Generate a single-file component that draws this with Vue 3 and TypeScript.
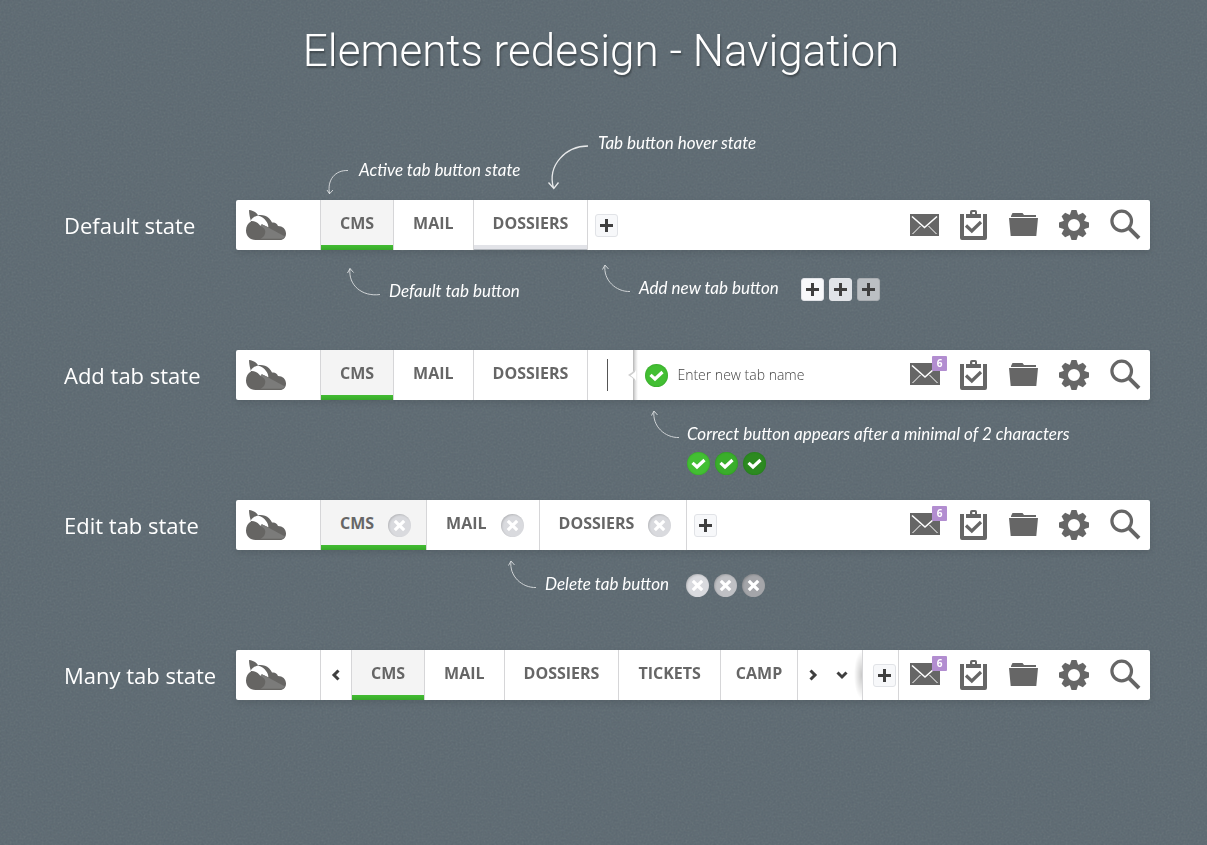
<script setup lang="ts">
import { ref } from 'vue'

type Kind = 'default' | 'add' | 'edit' | 'many'

interface Tab {
  name: string
  active?: boolean
  hovered?: boolean
  clipped?: boolean
}

interface Row {
  kind: Kind
  label: string
  unread: number
  tabs: Tab[]
}

const baseTabs: Tab[] = [{ name: 'CMS', active: true }, { name: 'MAIL' }, { name: 'DOSSIERS' }]

const rows: Row[] = [
  {
    kind: 'default',
    label: 'Default state',
    unread: 0,
    tabs: [{ name: 'CMS', active: true }, { name: 'MAIL' }, { name: 'DOSSIERS', hovered: true }],
  },
  { kind: 'add', label: 'Add tab state', unread: 6, tabs: baseTabs },
  { kind: 'edit', label: 'Edit tab state', unread: 6, tabs: baseTabs },
  {
    kind: 'many',
    label: 'Many tab state',
    unread: 6,
    tabs: [...baseTabs, { name: 'TICKETS' }, { name: 'CAMP', clipped: true }],
  },
]

const tools = [
  { id: 'clipboard', title: 'Tasks' },
  { id: 'folder', title: 'Files' },
  { id: 'gear', title: 'Settings' },
  { id: 'search', title: 'Search' },
]

const shades = ['normal', 'hover', 'pressed']
const newTab = ref('')
</script>

<template>
  <svg class="defs" aria-hidden="true">
    <symbol id="logo" viewBox="0 0 40 30">
      <path fill="#666563" d="M3 0C7 0.500 11 2.500 12 5.200C15 4.500 20 5 23 8.300C25 10.500 25.500 11.500 26 12.500C29 12 31 13.500 32 16C36.500 16 40 19 40 23.500C40 27.500 37.500 30 34 30H9.500C4 30 0 26 0 20.500C0 16 2 13 5 11.500C4 8 3 4 3 0Z" />
      <path fill="#fff" d="M5 10C6.500 8 8.500 6.300 12 5.500C16 6.500 18.500 8.500 20 11C21.500 13 22.500 15 22.300 17.200L15.800 14.200L14.500 16C12.500 13 9 10.800 5 11Z" />
      <path fill="#7b7b7a" d="M14.500 16L15.800 14.200L18 15.200L39 26.500C37.500 28.500 36 28.800 34 28.800H14C17 28 19.300 25 19.300 21.500C19.300 19 17 17 14.500 16Z" />
    </symbol>
    <symbol id="mail" viewBox="0 0 50 50">
      <path fill="#666" d="M10 14H39V36H10Z" />
      <path fill="none" stroke="#fff" stroke-width="1.600" d="M12 16.500L24.500 27.500L37 16.500" />
      <path fill="none" stroke="#fff" d="M12.500 34L20.500 26M36.500 34L28.500 26" />
    </symbol>
    <symbol id="mail-unread" viewBox="0 0 50 50">
      <path fill="#666" d="M10 13H40V35H10Z" />
      <path fill="none" stroke="#fff" stroke-width="1.600" d="M12 15.500L25 27L38 15.500" />
      <path fill="none" stroke="#fff" d="M12.500 33L20.500 25M37.500 33L29.500 25" />
    </symbol>
    <symbol id="clipboard" viewBox="0 0 50 50">
      <path fill="#666" d="M10 14H14V36H33V14H37V38Q37 40 35 40H12Q10 40 10 38Z" />
      <path fill="#666" fill-rule="evenodd" d="M16 14H20V12Q20 10 22 10H25Q27 10 27 12V14H31V18H16ZM22.300 14H25V12H22.300Z" />
      <path fill="none" stroke="#666" stroke-width="3.200" d="M16 25.500L21.800 31L31 22" />
    </symbol>
    <symbol id="folder" viewBox="0 0 50 50">
      <path fill="#666" d="M11 17V16L12.500 13H22.500L24 15H36V17ZM9 18H38L36.300 36H10.700Z" />
    </symbol>
    <symbol id="gear" viewBox="0 0 50 50">
      <g fill="#666" transform="translate(24 25)">
        <path v-for="a in 8" :key="a" :transform="`rotate(${a * 45})`" d="M-4.500-9L-2.500-15H2.500L4.500-9Z" />
        <path fill-rule="evenodd" d="M-11 0A11 11 0 1 0 11 0A11 11 0 1 0-11 0ZM-6 0A6 6 0 1 1 6 0A6 6 0 1 1-6 0Z" />
      </g>
    </symbol>
    <symbol id="search" viewBox="0 0 50 50">
      <g fill="none" stroke="#666">
        <circle cx="21.700" cy="21" r="9.800" stroke-width="3.200" />
        <path stroke-width="4" d="M28.500 27.700L39 38.200" />
      </g>
    </symbol>
    <symbol id="plus" viewBox="0 0 13 13">
      <path fill="#3f3f3f" d="M5 0H8V5H13V8H8V13H5V8H0V5H5Z" />
    </symbol>
    <symbol id="check" viewBox="0 0 23 23">
      <path fill="none" stroke="#fff" stroke-width="3.200" d="M5.500 10.800L10 15L17.500 8" />
    </symbol>
    <symbol id="cross" viewBox="0 0 23 23">
      <path fill="none" stroke="#fff" stroke-width="3.200" d="M6.800 6.800L16.200 16.200M16.200 6.800L6.800 16.200" />
    </symbol>
    <symbol id="chevron" viewBox="0 0 12 12">
      <path fill="none" stroke="#3f3f3f" stroke-width="3" d="M8.500 1.500L4 6L8.500 10.500" />
    </symbol>
    <symbol id="curl" viewBox="0 0 30 30">
      <path d="M28 27.500C14 28 1 16 3 1M0.500 5.500L3 1L6.500 5" />
    </symbol>
  </svg>

  <svg class="grain" aria-hidden="true">
    <filter id="noise">
      <feTurbulence type="fractalNoise" baseFrequency="0.5" numOctaves="2" />
      <feColorMatrix type="saturate" values="0.3" />
    </filter>
    <rect width="100%" height="100%" filter="url(#noise)" />
  </svg>

  <main class="page">
    <h1>Elements redesign - Navigation</h1>

    <section v-for="row in rows" :key="row.kind" class="state" :class="row.kind">
      <div v-if="row.kind === 'default'" class="strip above">
        <p class="note active-note">
          <svg class="arrow" width="24" height="28" viewBox="0 0 24 28">
            <path d="M21 2.500C8 2 0 12 2.500 25.500M0 22L2.500 25.800L6 22" />
          </svg>
          <span>Active tab button state</span>
        </p>
        <p class="note hover-note">
          <svg class="arrow strong" width="42" height="46" viewBox="0 0 42 46">
            <path d="M40 1C18 1-1 20 5.500 43M0.500 37.500L5.800 43.500L10.500 37.500" />
          </svg>
          <span>Tab button hover state</span>
        </p>
      </div>

      <div class="line">
        <h2>{{ row.label }}</h2>
        <nav class="bar" :aria-label="row.label">
          <a class="logo" href="#" aria-label="Home"><svg width="40" height="30"><use href="#logo" /></svg></a>

          <button v-if="row.kind === 'many'" class="scroll first" aria-label="Previous tabs">
            <svg width="12" height="12"><use href="#chevron" /></svg>
          </button>

          <div
            v-for="tab in row.tabs"
            :key="tab.name"
            class="tab"
            :class="{ active: tab.active, hovered: tab.hovered, clipped: tab.clipped }"
          >
            <button class="name">{{ tab.name }}</button>
            <button v-if="row.kind === 'edit'" class="round delete" :aria-label="`Delete ${tab.name}`">
              <svg width="23" height="23"><use href="#cross" /></svg>
            </button>
          </div>

          <button v-if="row.kind === 'default' || row.kind === 'edit'" class="square" aria-label="Add new tab">
            <svg width="13" height="13"><use href="#plus" /></svg>
          </button>

          <template v-if="row.kind === 'add'">
            <div class="caret-cell"><i class="caret"></i></div>
            <form class="new-tab" @submit.prevent>
              <svg class="notch" width="8" height="16" viewBox="0 0 8 16" aria-hidden="true">
                <path fill="#cfcfcf" d="M7 0C7 4 3 6 0 8C3 10 7 12 7 16Z" />
                <path fill="#fff" d="M8 3C7 6 4 7 2.500 8.500C4 10 7 11 8 14Z" />
              </svg>
              <button class="round confirm" aria-label="Confirm"><svg width="23" height="23"><use href="#check" /></svg></button>
              <input v-model="newTab" type="text" aria-label="New tab name" placeholder="Enter new tab name" />
            </form>
          </template>

          <template v-if="row.kind === 'many'">
            <div class="more">
              <button class="scroll next" aria-label="Next tabs"><svg width="12" height="12"><use href="#chevron" /></svg></button>
              <button class="scroll down" aria-label="All tabs"><svg width="12" height="12"><use href="#chevron" /></svg></button>
            </div>
            <div class="add-cell">
              <button class="square" aria-label="Add new tab"><svg width="13" height="13"><use href="#plus" /></svg></button>
            </div>
          </template>

          <div class="tools">
            <button aria-label="Mail">
              <svg width="50" height="50"><use :href="row.unread ? '#mail-unread' : '#mail'" /></svg>
              <span v-if="row.unread" class="badge">{{ row.unread }}</span>
            </button>
            <button v-for="tool in tools" :key="tool.id" :aria-label="tool.title">
              <svg width="50" height="50"><use :href="`#${tool.id}`" /></svg>
            </button>
          </div>
        </nav>
      </div>

      <div class="strip below">
        <template v-if="row.kind === 'default'">
          <p class="note default-note">
            <svg class="arrow" width="34" height="30" viewBox="0 0 34 30">
              <path d="M33 27.500C15 30 1 18 3 1.500M0.500 6L3 1.500L6.500 5.500" />
            </svg>
            <span>Default tab button</span>
          </p>
          <div class="note add-note">
            <svg class="arrow" width="30" height="30"><use href="#curl" /></svg>
            <span>Add new tab button</span>
            <div class="samples">
              <button v-for="s in shades" :key="s" class="square" :class="s" :aria-label="`Add, ${s}`">
                <svg width="13" height="13"><use href="#plus" /></svg>
              </button>
            </div>
          </div>
        </template>
        <div v-else-if="row.kind === 'add'" class="note correct-note">
          <svg class="arrow" width="30" height="30"><use href="#curl" /></svg>
          <span>Correct button appears after a minimal of 2 characters</span>
          <div class="samples">
            <button v-for="s in shades" :key="s" class="round confirm" :class="s" :aria-label="`Confirm, ${s}`">
              <svg width="23" height="23"><use href="#check" /></svg>
            </button>
          </div>
        </div>
        <div v-else-if="row.kind === 'edit'" class="note delete-note">
          <svg class="arrow" width="30" height="30"><use href="#curl" /></svg>
          <span>Delete tab button</span>
          <div class="samples">
            <button v-for="s in shades" :key="s" class="round delete" :class="s" :aria-label="`Delete, ${s}`">
              <svg width="23" height="23"><use href="#cross" /></svg>
            </button>
          </div>
        </div>
      </div>
    </section>
  </main>
</template>

<style>
body {
  margin: 0;
  background: #5b6870;
}
</style>

<style scoped>
.defs {
  position: absolute;
  width: 0;
  height: 0;
}

.grain {
  position: fixed;
  inset: 0;
  width: 100%;
  height: 100%;
  opacity: 0.12;
  pointer-events: none;
}

.page {
  position: relative;
  box-sizing: border-box;
  padding: 24px 57px 0 64px;
  font-family: 'Open Sans', 'Noto Sans', sans-serif;
  color: #fff;
}

svg {
  display: block;
}

h1 {
  margin: 0;
  padding-right: 12px;
  text-align: center;
  font: 300 44px/54px Roboto, 'Helvetica Neue', sans-serif;
  text-shadow: 1px 2px 2px rgba(0, 0, 0, 0.35);
}

h2 {
  flex: none;
  width: 172px;
  margin: 0;
  font-size: 22px;
  font-weight: 400;
  line-height: 50px;
  white-space: nowrap;
}

button {
  padding: 0;
  border: 0;
  background: none;
  font: inherit;
  color: inherit;
  cursor: pointer;
}

.line {
  display: flex;
}

.bar {
  display: flex;
  flex: 1;
  height: 50px;
  border-radius: 2px;
  background: #fff;
  box-shadow: 0 3px 6px rgba(0, 0, 0, 0.1);
  color: #666;
}

.logo {
  display: flex;
  align-items: center;
  width: 74px;
  padding-left: 10px;
  border-right: 1px solid #d6d6d8;
}

.tab {
  display: flex;
  align-items: center;
  border-right: 1px solid #d6d6d8;
}

.tab .name {
  box-sizing: border-box;
  height: 50px;
  padding: 0 19px;
  border-bottom: 5px solid transparent;
  font-size: 16px;
  font-weight: 700;
}

.tab.active {
  background: linear-gradient(#f4f4f4 45px, #42bd32 45px, #39a82b 50px);
}

.tab.hovered {
  background: linear-gradient(#fff 45px, #e2e3e8 45px, #e2e3e8 49px, #b4b8be 49px);
}

.edit .tab {
  padding-right: 15px;
}

.edit .tab .name {
  padding-right: 14px;
}

.tab.clipped .name {
  padding: 0 15px;
}

.square {
  display: grid;
  flex: none;
  place-items: center;
  box-sizing: border-box;
  width: 23px;
  height: 23px;
  border: 1px solid #e1e3e7;
  border-radius: 3px;
  background: #f7f8fa;
}

.bar .square {
  align-self: center;
  margin-left: 7px;
}

.square.hover {
  background: #e0e3e8;
}

.square.pressed {
  border-color: #a9adb1;
  background: #bbbfc3;
}

.round {
  flex: none;
  width: 23px;
  height: 23px;
  border-radius: 50%;
}

.confirm {
  background: #43bf33;
  box-shadow: inset 0 0 2px rgba(0, 80, 0, 0.35);
}

.confirm.hover {
  background: #3aae2b;
}

.confirm.pressed {
  background: #2c8a20;
}

.delete {
  background: #d9dade;
  box-shadow: inset 1px 1px 2px rgba(0, 0, 0, 0.16);
}

.delete.hover {
  background: #bfc0c4;
}

.delete.pressed {
  background: #a4a5a9;
}

.caret-cell {
  display: flex;
  align-items: center;
  width: 45px;
}

.caret {
  width: 1px;
  height: 32px;
  margin-left: 19px;
  background: #555;
}

.new-tab {
  position: relative;
  display: flex;
  align-items: center;
  padding-left: 12px;
  background: linear-gradient(90deg, #b4b4b4 0, #dcdcdc 2px, #fff 5px);
}

.notch {
  position: absolute;
  left: -5px;
  top: 17px;
}

.new-tab input {
  width: 200px;
  height: 30px;
  margin: 0 0 2px 9px;
  padding: 0;
  border: 0;
  outline: 0;
  background: none;
  font: 300 14px 'Open Sans', sans-serif;
  color: #444;
}

.new-tab input::placeholder {
  color: #444;
  opacity: 1;
}

.scroll {
  display: grid;
  place-items: center;
  width: 29px;
  height: 50px;
}

.scroll.first {
  width: 31px;
  border-right: 1px solid #d6d6d8;
}

.scroll.next svg {
  transform: rotate(180deg);
}

.scroll.down svg {
  transform: rotate(-90deg);
}

.more {
  display: flex;
  width: 64px;
  border-right: 1px solid #d6d6d8;
  background: radial-gradient(ellipse 8px 24px at 100% 50%, rgba(0, 0, 0, 0.22), transparent);
}

.add-cell {
  display: flex;
  width: 35px;
  border-right: 1px solid #d6d6d8;
}

.add-cell .square {
  margin-left: 10px;
}

.tools {
  display: flex;
  margin-left: auto;
}

.tools button {
  position: relative;
  width: 50px;
  height: 50px;
}

.badge {
  position: absolute;
  left: 32px;
  top: 6px;
  width: 15px;
  border-radius: 1px;
  background: #b28dd0;
  color: #fff;
  font-size: 10px;
  font-weight: 700;
  line-height: 15px;
  text-align: center;
}

.strip {
  display: flex;
  align-items: flex-start;
  margin-left: 172px;
}

.strip.above {
  height: 122px;
}

.strip.below {
  height: 100px;
}

.note {
  display: grid;
  grid-template-columns: auto auto auto;
  justify-content: start;
  margin: 0;
  font: italic 400 17px/20px Lato, 'Open Sans', sans-serif;
  white-space: nowrap;
}

.arrow {
  overflow: visible;
  fill: none;
  stroke: #fff;
  stroke-width: 1;
  opacity: 0.7;
}

.arrow.strong {
  stroke-width: 1.3;
  opacity: 0.85;
}

.samples {
  display: flex;
  gap: 5px;
}

.active-note {
  grid-template-columns: 32px 189px;
  margin: 90px 0 0 91px;
}

.active-note span {
  margin-top: -8px;
}

.hover-note {
  grid-template-columns: 50px auto;
  margin-top: 67px;
}

.hover-note span {
  margin-top: -12px;
}

.default-note {
  grid-template-columns: 42px 213px;
  margin: 17px 0 0 111px;
}

.default-note span,
.add-note span,
.correct-note span,
.delete-note span {
  margin-top: 14px;
}

.add-note {
  grid-template-columns: 37px 162px auto;
  margin-top: 14px;
}

.add-note .samples {
  margin-top: 14px;
}

.correct-note {
  grid-template-columns: 36px auto;
  margin: 10px 0 0 415px;
}

.correct-note .samples {
  grid-column: 2;
  margin-top: 8px;
}

.delete-note {
  grid-template-columns: 37px 141px auto;
  margin: 10px 0 0 272px;
}

.delete-note .samples {
  margin-top: 14px;
}
</style>
